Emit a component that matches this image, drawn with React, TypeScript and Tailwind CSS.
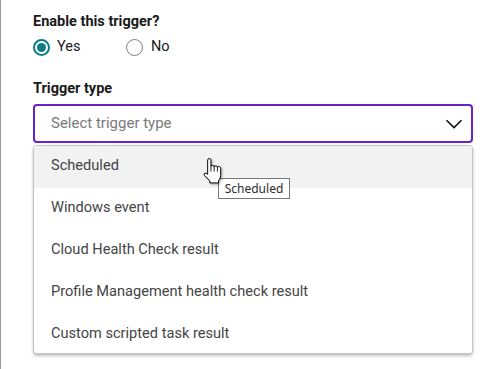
import React from "react";

const items = [
  "Scheduled",
  "Windows event",
  "Cloud Health Check result",
  "Profile Management health check result",
  "Custom scripted task result",
];

function Radio({ checked }: { checked: boolean }) {
  return checked ? (
    <span className="flex h-[17px] w-[17px] items-center justify-center rounded-full border-2 border-[#0d7b88] bg-white">
      <span className="h-[9px] w-[9px] rounded-full bg-[#0d7b88]" />
    </span>
  ) : (
    <span className="h-[17px] w-[17px] rounded-full border border-[#7a7a7a] bg-white" />
  );
}

export default function App() {
  return (
    <div
      className="relative h-[369px] w-[501px] overflow-hidden border-l border-[#9c9c9c] bg-white pl-[32px]"
      style={{ fontFamily: "Roboto, 'Noto Sans', sans-serif" }}
    >
      <div className="pt-[12px] text-[14.5px] font-bold leading-[20px] text-[#1a1a1a]">
        Enable this trigger?
      </div>
      <div className="mt-[5px] flex h-[20px] items-center text-[14.5px] text-[#1a1a1a]">
        <Radio checked />
        <span className="ml-[7px] w-[69px]">Yes</span>
        <Radio checked={false} />
        <span className="ml-[8px]">No</span>
      </div>
      <div className="mt-[22px] text-[14.5px] font-bold leading-[20px] text-[#1a1a1a]">
        Trigger type
      </div>
      <div className="mt-[5px] flex h-[39px] w-[440px] items-center justify-between rounded-[4px] border-2 border-[#6a22c6] pl-[16px] pr-[8px]">
        <span className="text-[15px] text-[#7a7a7a]">Select trigger type</span>
        <svg width="18" height="10" viewBox="0 0 18 10" fill="none">
          <path d="M1.5 1.2 L9 8.6 L16.5 1.2" stroke="#111" strokeWidth="1.6" />
        </svg>
      </div>
      <div className="mt-[2px] h-[209px] w-[440px] overflow-hidden rounded-[4px] border border-[#c4c4c4] bg-white shadow-[0_2px_3px_rgba(0,0,0,0.25)]">
        {items.map((t, i) => (
          <div
            key={t}
            className={`flex h-[42px] items-center pb-[2px] pl-[17px] text-[14.6px] text-[#454545] ${
              i === 0 ? "bg-[#f2f2f2]" : "bg-white"
            }`}
          >
            {t}
          </div>
        ))}
      </div>

      <div
        className="absolute left-[217px] top-[178px] flex h-[21px] w-[72px] items-center justify-center border border-[#767676] bg-white text-[12px] text-[#2b2b2b]"
        style={{ fontFamily: "'Noto Sans', 'Open Sans', sans-serif" }}
      >
        Scheduled
      </div>

      <svg
        className="absolute left-[201px] top-[158px]"
        width="20"
        height="26"
        viewBox="0 0 18 24"
        style={{ filter: "drop-shadow(1px 1px 1px rgba(0,0,0,0.35))" }}
      >
        <path
          d="M5 12 L5 2 A1.5 1.5 0 0 1 8 2 L8 8 A1.5 1.5 0 0 1 11 8.5 A1.5 1.5 0 0 1 14 9 A1.5 1.5 0 0 1 17 10 L17 16 Q17 19 15 21 L15 23 L7 23 L7 21 L2 16 Q1 14.5 2.5 14 Q3.5 13.6 5 15 Z"
          fill="#fff"
          stroke="#000"
          strokeWidth="0.9"
          strokeLinejoin="round"
        />
        <path d="M11 8.5 V12.5 M14 9 V12.5 M8 8 V12.5" stroke="#000" strokeWidth="0.8" />
      </svg>
    </div>
  );
}
